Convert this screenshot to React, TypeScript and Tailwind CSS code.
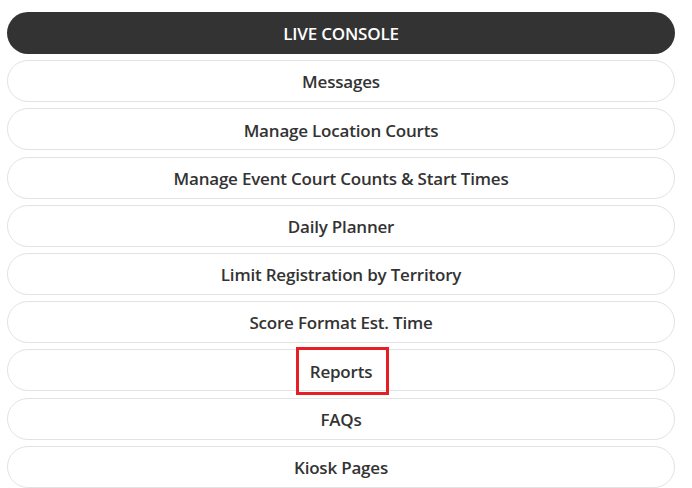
import React from "react";

const items = [
  "Messages",
  "Manage Location Courts",
  "Manage Event Court Counts & Start Times",
  "Daily Planner",
  "Limit Registration by Territory",
  "Score Format Est. Time",
  "Reports",
  "FAQs",
  "Kiosk Pages",
];

export default function App() {
  return (
    <div
      className="w-[692px] h-[488px] overflow-hidden bg-white pt-[12px] pl-[7px]"
      style={{ fontFamily: '"Open Sans", "Noto Sans", sans-serif' }}
    >
      <div className="flex flex-col w-[668px] gap-[6.2px]">
        <div className="h-[42px] pt-[2px] rounded-full bg-[#333333] flex items-center justify-center text-white font-semibold text-[17px] tracking-[-0.2px]">
          LIVE CONSOLE
        </div>
        {items.map((t) => (
          <div
            key={t}
            className="relative h-[42px] pt-[2px] shrink-0 rounded-full border border-[#e3e3e3] bg-white flex items-center justify-center text-[#333333] font-semibold text-[17px] tracking-[-0.2px]"
          >
            {t === "Reports" ? (
              <span className="relative">
                {t}
                <span className="absolute -left-[14px] -right-[17px] -top-[12px] -bottom-[11px] border-[3.5px] border-[#e61e25]" />
              </span>
            ) : (
              t
            )}
          </div>
        ))}
      </div>
    </div>
  );
}
